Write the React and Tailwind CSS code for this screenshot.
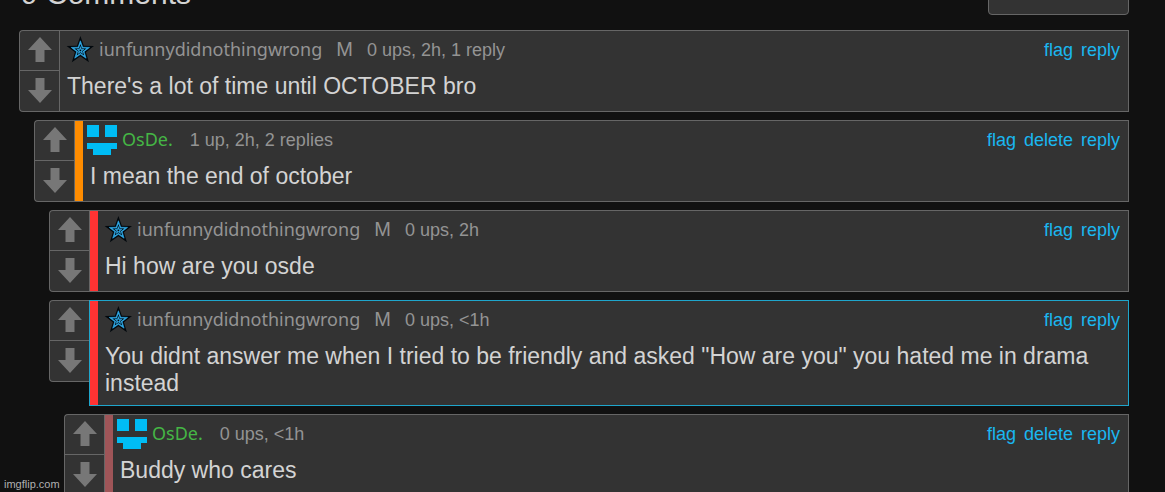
import { useState } from 'react';
import clsx from 'clsx';

const comments = [
    {
        id: 1, user: 'iunfunnydidnothingwrong', icon: 'star', mod: true,
        stats: '0 ups, 2h, 1 reply', actions: ['flag', 'reply'],
        text: "There's a lot of time until OCTOBER bro",
        indent: 'ml-0', bar: null,
    },
    {
        id: 2, user: 'OsDe.', icon: 'smile', mod: false,
        stats: '1 up, 2h, 2 replies', actions: ['flag', 'delete', 'reply'],
        text: 'I mean the end of october',
        indent: 'ml-[15px]', bar: 'bg-[#ff8c00]',
    },
    {
        id: 3, user: 'iunfunnydidnothingwrong', icon: 'star', mod: true,
        stats: '0 ups, 2h', actions: ['flag', 'reply'],
        text: 'Hi how are you osde',
        indent: 'ml-[30px]', bar: 'bg-[#ff3333]',
    },
    {
        id: 4, user: 'iunfunnydidnothingwrong', icon: 'star', mod: true,
        stats: '0 ups, <1h', actions: ['flag', 'reply'],
        text: 'You didnt answer me when I tried to be friendly and asked "How are you" you hated me in drama instead',
        indent: 'ml-[30px]', bar: 'bg-[#ff3333]', active: true,
    },
    {
        id: 5, user: 'OsDe.', icon: 'smile', mod: false,
        stats: '0 ups, <1h', actions: ['flag', 'delete', 'reply'],
        text: 'Buddy who cares',
        indent: 'ml-[45px]', bar: 'bg-[#9f5558]',
    },
];

// five-pointed star around 0,0 with a radius of 100
const star = 'M0-100L24-32L95-31L38 13L59 81L0 41L-59 81L-38 13L-95-31L-24-32Z';

function StarIcon() {
    return (
        <svg width="30" height="30" viewBox="0 0 30 30" aria-hidden="true">
            <g transform="translate(16.4 15.4)">
                <path d={star} transform="scale(.145)" fill="#02080d" />
                <path d={star} transform="scale(.096)" fill="#2fa9e6" stroke="#2fa9e6" strokeWidth="7" />
                <path d={star} transform="scale(.064)" fill="#02080d" />
                <path d={star} transform="scale(.038)" fill="#2fa9e6" stroke="#2fa9e6" strokeWidth="14" />
                <circle r="0.9" fill="#02080d" />
            </g>
        </svg>
    );
}

function SmileIcon() {
    return (
        <svg width="30" height="30" viewBox="0 0 30 30" aria-hidden="true" shapeRendering="crispEdges">
            <path d="M0 0H12V12H0ZM18 0H30V12H18ZM0 18H30V24H24V30H6V24H0Z" fill="#00bdf5" />
        </svg>
    );
}

function Arrow({ down }) {
    return (
        <svg width="24" height="25" viewBox="0 0 24 25" className={clsx(down && 'rotate-180')} aria-hidden="true">
            <path d="M12 0L24 13H16.5V25H7.5V13H0Z" fill="#777" />
        </svg>
    );
}

function Votes() {
    const [vote, setVote] = useState(0);

    return (
        <div className="flex shrink-0 flex-col self-start rounded-l border border-r-0 border-[#666] bg-[#333]">
            <button type="button" aria-label="upvote" aria-pressed={vote === 1} onClick={() => setVote(1)}
                className="flex h-10 w-[39px] items-start justify-center border-b border-[#666] pt-1.5">
                <Arrow />
            </button>
            <button type="button" aria-label="downvote" aria-pressed={vote === -1} onClick={() => setVote(-1)}
                className="flex h-10 w-[39px] items-start justify-center pt-[7px]">
                <Arrow down />
            </button>
        </div>
    );
}

function Comment({ comment }) {
    const { user, icon, mod, stats, actions, text, indent, bar, active } = comment;

    return (
        <li className={clsx('flex', indent)}>
            <Votes />
            <div className={clsx('flex min-w-0 grow border bg-[#333]', active ? 'border-[#1fa6cc]' : 'border-[#666]')}>
                {bar && <div className={clsx('w-2 shrink-0', bar)}></div>}
                <div className="min-w-0 grow pb-2">
                    <div className="flex h-[38px] items-center pr-2 pl-1 text-lg text-[#949494]">
                        {icon === 'star' ? <StarIcon /> : <SmileIcon />}
                        <a href="#user" className={clsx("ml-[5px] pb-0.5 font-['Noto_Sans',sans-serif]", icon === 'smile' && 'text-[#45b645]')}>{user}</a>
                        {mod && <span className="ml-3.5 pb-0.5 text-xl">M</span>}
                        <span className={mod ? 'ml-3.5' : 'ml-[17px]'}>{stats}</span>
                        <div className="ml-auto flex gap-2 text-[#1ab7f0]">
                            {actions.map((action) => <a key={action} href={'#' + action}>{action}</a>)}
                        </div>
                    </div>
                    <p className="px-[7px] pt-1 text-[23px] leading-[27px] text-[#d3d3d3]">{text}</p>
                </div>
            </div>
        </li>
    );
}

export default function App() {
    return (
        <div className="relative h-screen overflow-hidden bg-[#111] font-['Liberation_Sans',Arial,sans-serif]">
            <div className="pr-9 pl-[19px]">
                <div className="-mt-7 mb-[15px] flex items-start justify-between">
                    <h2 className="pt-1 pl-0.5 text-3xl text-[#d3d3d3]">9 Comments</h2>
                    <button type="button" aria-label="sort comments" className="h-[43px] w-[141px] rounded border border-[#666] bg-[#333]"></button>
                </div>
                <ul className="flex flex-col gap-2">
                    {comments.map((comment) => <Comment key={comment.id} comment={comment} />)}
                </ul>
            </div>
            <span className="absolute bottom-0 left-1 text-[11px] text-[#b0b0b0]">imgflip.com</span>
        </div>
    );
}
